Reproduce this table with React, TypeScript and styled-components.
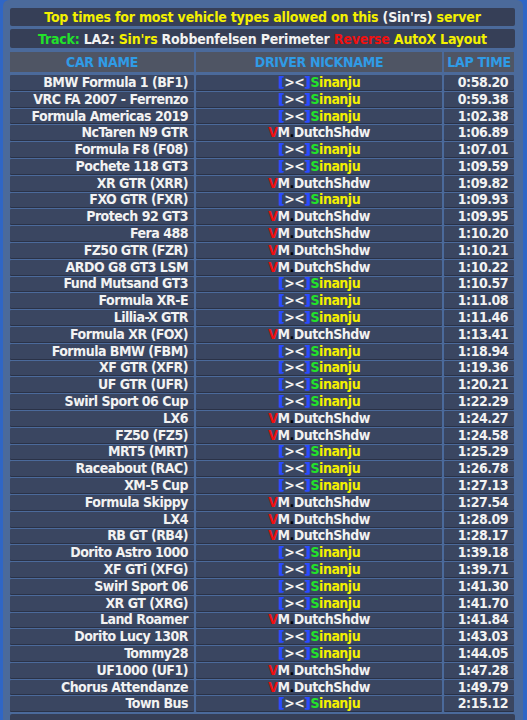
import React from 'react';
import styled, { createGlobalStyle } from 'styled-components';

const GlobalStyle = createGlobalStyle`
    html, body {
        margin: 0;
        padding: 0;
        background: #2f66c6;
        height: 720px;
        overflow: hidden;
    }
`;

const Frame = styled.div`
    margin-left: 3px;
    width: 520px;
    height: 720px;
    overflow: hidden;
    box-sizing: border-box;
    padding: 8px 7px 0 7px;
    background: #4b6a9b;
    border-radius: 6px 6px 0 0;
    display: flex;
    flex-direction: column;
    gap: 3px;
    font-family: 'DejaVu Sans Condensed', 'Liberation Sans', sans-serif;
    font-weight: bold;
    color: #f2f2f2;
`;

const InfoBar = styled.div<{ $h: number }>`
    flex: none;
    height: ${(p) => p.$h}px;
    width: 505px;
    background: #363f57;
    border-radius: 2px;
    display: flex;
    align-items: center;
    justify-content: center;
    font-size: 14px;
    letter-spacing: -0.2px;
    white-space: nowrap;
`;

const Table = styled.div`
    flex: none;
    display: grid;
    grid-template-columns: 184px 246px 70px;
    column-gap: 2px;
    row-gap: 2px;
    margin-top: 1px;
`;

const HeadCell = styled.div`
    height: 20px;
    margin-bottom: 1px;
    background: #4f5564;
    color: #2f9be6;
    font-size: 14px;
    letter-spacing: -0.3px;
    display: flex;
    align-items: center;
    justify-content: center;
`;

const Cell = styled.div<{ $align: 'left' | 'center' | 'right' }>`
    height: 14.8px;
    background: #3a4661;
    border-radius: 1px;
    box-shadow: 0 1px 0 #2a3247;
    font-size: 14px;
    line-height: 15px;
    letter-spacing: -0.5px;
    display: flex;
    align-items: center;
    justify-content: ${(p) => (p.$align === 'right' ? 'flex-end' : p.$align === 'center' ? 'center' : 'flex-start')};
    padding: 0 6px;
    white-space: nowrap;
    overflow: hidden;
`;

const C = styled.span<{ $c: string }>`
    color: ${(p) => p.$c};
`;

const Bracket = styled.span`
    color: #2a4bff;
    text-shadow: 1px 0 0 #2a4bff;
    padding-right: 1px;
`;

const YELLOW = '#f4f000';
const GREEN = '#22e22a';
const RED = '#f01010';
const WHITE = '#f2f2f2';

type Row = [string, 'S' | 'D', string];

const rows: Row[] = [
    ['BMW Formula 1 (BF1)', 'S', '0:58.20'],
    ['VRC FA 2007 - Ferrenzo', 'S', '0:59.38'],
    ['Formula Americas 2019', 'S', '1:02.38'],
    ['NcTaren N9 GTR', 'D', '1:06.89'],
    ['Formula F8 (F08)', 'S', '1:07.01'],
    ['Pochete 118 GT3', 'S', '1:09.59'],
    ['XR GTR (XRR)', 'D', '1:09.82'],
    ['FXO GTR (FXR)', 'S', '1:09.93'],
    ['Protech 92 GT3', 'D', '1:09.95'],
    ['Fera 488', 'D', '1:10.20'],
    ['FZ50 GTR (FZR)', 'D', '1:10.21'],
    ['ARDO G8 GT3 LSM', 'D', '1:10.22'],
    ['Fund Mutsand GT3', 'S', '1:10.57'],
    ['Formula XR-E', 'S', '1:11.08'],
    ['Lillia-X GTR', 'S', '1:11.46'],
    ['Formula XR (FOX)', 'D', '1:13.41'],
    ['Formula BMW (FBM)', 'S', '1:18.94'],
    ['XF GTR (XFR)', 'S', '1:19.36'],
    ['UF GTR (UFR)', 'S', '1:20.21'],
    ['Swirl Sport 06 Cup', 'S', '1:22.29'],
    ['LX6', 'D', '1:24.27'],
    ['FZ50 (FZ5)', 'D', '1:24.58'],
    ['MRT5 (MRT)', 'S', '1:25.29'],
    ['Raceabout (RAC)', 'S', '1:26.78'],
    ['XM-5 Cup', 'S', '1:27.13'],
    ['Formula Skippy', 'D', '1:27.54'],
    ['LX4', 'D', '1:28.09'],
    ['RB GT (RB4)', 'D', '1:28.17'],
    ['Dorito Astro 1000', 'S', '1:39.18'],
    ['XF GTi (XFG)', 'S', '1:39.71'],
    ['Swirl Sport 06', 'S', '1:41.30'],
    ['XR GT (XRG)', 'S', '1:41.70'],
    ['Land Roamer', 'D', '1:41.84'],
    ['Dorito Lucy 130R', 'S', '1:43.03'],
    ['Tommy28', 'S', '1:44.05'],
    ['UF1000 (UF1)', 'D', '1:47.28'],
    ['Chorus Attendanze', 'D', '1:49.79'],
    ['Town Bus', 'S', '2:15.12'],
];

const Driver = ({ who }: { who: 'S' | 'D' }) =>
    who === 'S' ? (
        <>
            <Bracket>[</Bracket>
            <C $c={WHITE}>&gt;&lt;</C>
            <Bracket>]</Bracket>
            <C $c={GREEN}>S</C>
            <C $c={YELLOW}>inanju</C>
        </>
    ) : (
        <>
            <C $c={RED}>V</C>
            <C $c={WHITE}>M</C>
            <C $c="#000">.</C>
            <C $c={WHITE}>DutchShdw</C>
        </>
    );

export default function App() {
    return (
        <>
            <GlobalStyle />
            <Frame>
                <InfoBar $h={18}>
                    <C $c={YELLOW}>Top times for most vehicle types allowed on this&nbsp;</C>
                    <C $c={WHITE}>(Sin'rs)</C>
                    <C $c={YELLOW}>&nbsp;server</C>
                </InfoBar>
                <InfoBar $h={19}>
                    <C $c={GREEN}>Track:&nbsp;</C>
                    <C $c={WHITE}>LA2:&nbsp;</C>
                    <C $c={YELLOW}>Sin'rs&nbsp;</C>
                    <C $c={WHITE}>Robbenfelsen Perimeter&nbsp;</C>
                    <C $c={RED}>Reverse&nbsp;</C>
                    <C $c={YELLOW}>AutoX Layout</C>
                </InfoBar>
                <Table>
                    <HeadCell>CAR NAME</HeadCell>
                    <HeadCell>DRIVER NICKNAME</HeadCell>
                    <HeadCell>LAP TIME</HeadCell>
                    {rows.map(([car, who, time]) => (
                        <React.Fragment key={car}>
                            <Cell $align="right">{car}</Cell>
                            <Cell $align="center">
                                <Driver who={who} />
                            </Cell>
                            <Cell $align="right">{time}</Cell>
                        </React.Fragment>
                    ))}
                </Table>
                <InfoBar $h={18} />
            </Frame>
        </>
    );
}
